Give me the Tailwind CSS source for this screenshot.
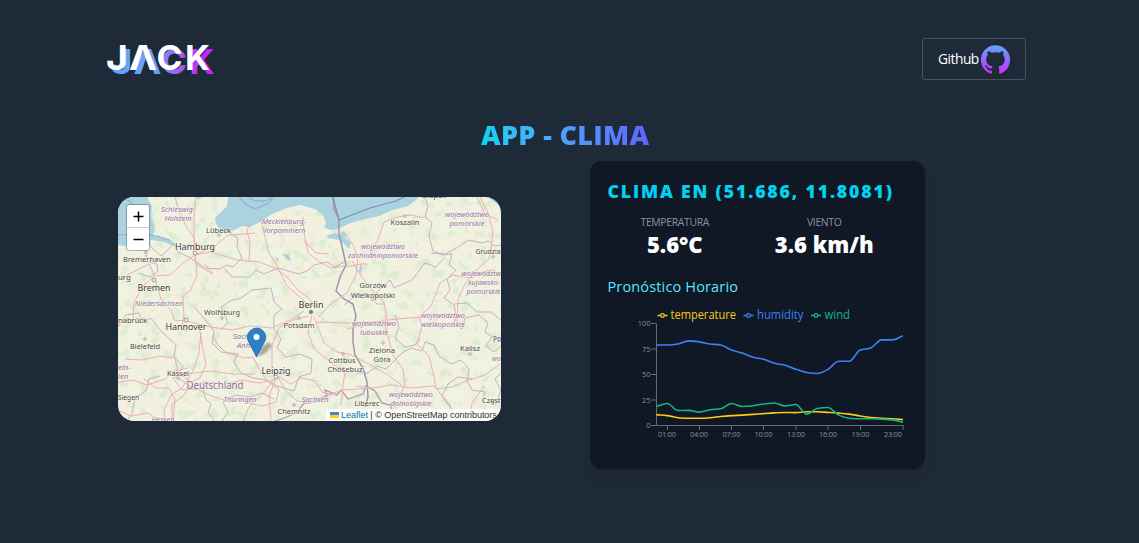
<!DOCTYPE html>
<html lang="es">
<head>
<meta charset="utf-8">
<title>App - Clima</title>
<script src="https://cdn.jsdelivr.net/npm/@tailwindcss/browser@4"></script>
</head>
<body class="h-[543px] overflow-hidden bg-[#1f2a39] font-['Open_Sans','Noto_Sans',sans-serif]">
<header class="flex items-start justify-between pt-[38px] pl-[105px] pr-[113px]">
  <svg class="mt-[2px]" width="112" height="38" viewBox="105 40 112 38" role="img" aria-label="JACK">
    <defs>
      <linearGradient id="lg" gradientUnits="userSpaceOnUse" x1="125" y1="0" x2="200" y2="0"><stop offset="0" stop-color="#60a5fa"/><stop offset=".35" stop-color="#6d9bfa"/><stop offset=".75" stop-color="#b04df8"/><stop offset="1" stop-color="#c026ff"/></linearGradient>
      <g id="word" font-family="Inter,sans-serif" font-weight="700" font-size="34">
        <text x="106" y="69.500" textLength="22" lengthAdjust="spacingAndGlyphs">J</text>
        <text x="129" y="69.500" textLength="28" lengthAdjust="spacingAndGlyphs">Λ</text>
        <text x="156.500" y="69.500" textLength="26" lengthAdjust="spacingAndGlyphs">C</text>
        <text x="185" y="69.500" textLength="25" lengthAdjust="spacingAndGlyphs">K</text>
      </g>
    </defs>
    <use href="#word" x="4.500" y="4" fill="url(#lg)"/>
    <use href="#word" fill="#fff"/>
  </svg>
  <a class="flex h-[42px] w-[104px] items-center rounded-[3px] border border-[#45515f] pl-[15px] text-[13.800px] text-white"><span class="w-[43px] tracking-[-0.500px] whitespace-nowrap">Github</span>
    <svg class="shrink-0" width="29" height="29" viewBox="0 0 24 24"><defs><linearGradient id="gg" x2="0" y2="1"><stop stop-color="#60a5fa"/><stop offset="1" stop-color="#c62fff"/></linearGradient></defs><path fill="url(#gg)" d="M12 .3a12 12 0 0 0-3.800 23.400c.6.1.8-.3.8-.6v-2c-3.300.7-4-1.600-4-1.600-.6-1.400-1.400-1.800-1.400-1.800-1-.7.1-.7.1-.7 1.200 0 1.900 1.200 1.900 1.200 1 1.800 2.800 1.300 3.500 1 0-.8.400-1.300.7-1.600-2.700-.3-5.500-1.300-5.500-6 0-1.200.5-2.300 1.300-3.100-.2-.4-.6-1.600 0-3.200 0 0 1-.3 3.400 1.200a11.500 11.500 0 0 1 6 0c2.300-1.500 3.300-1.200 3.300-1.200.6 1.600.2 2.800 0 3.200.9.800 1.300 1.900 1.300 3.200 0 4.600-2.800 5.600-5.500 5.900.5.400.9 1 .9 2.200v3.300c0 .3.100.7.800.6A12 12 0 0 0 12 .3"/></svg>
  </a>
</header>
<main>
  <h1 class="mt-[37px] ml-[481px] h-[36px] w-[171px] bg-gradient-to-r from-[#00d3f2] to-[#615fff] bg-clip-text text-[27px] leading-[36px] font-extrabold tracking-[0.350px] whitespace-nowrap text-transparent">APP - CLIMA</h1>
  <div class="mt-[8px] flex items-start pl-[118px]">
    <section class="relative mt-[36px] h-[224px] w-[383px] shrink-0 overflow-hidden rounded-2xl">
      <svg width="383" height="224" viewBox="118 197 383 224" class="block" font-family="Noto Sans,sans-serif">
        <defs>
          <filter id="woods" x="0" y="0" width="1" height="1"><feTurbulence type="fractalNoise" baseFrequency=".1" numOctaves="4" seed="8"/><feColorMatrix values="0 0 0 0 .70  0 0 0 0 .84  0 0 0 0 .62  9 0 0 0 -5.100"/></filter>
          <filter id="heath" x="0" y="0" width="1" height="1"><feTurbulence type="fractalNoise" baseFrequency=".05" numOctaves="4" seed="21"/><feColorMatrix values="0 0 0 0 .85  0 0 0 0 .91  0 0 0 0 .76  5 0 0 0 -2.500"/></filter>
          <filter id="soft"><feGaussianBlur stdDeviation="1.200"/></filter>
        </defs>
        <rect x="118" y="197" width="383" height="224" fill="#f2f0df"/>
        <rect x="118" y="197" width="383" height="224" filter="url(#heath)" opacity=".85"/>
        <rect x="118" y="197" width="383" height="224" filter="url(#woods)" opacity=".8"/>
        <g fill="#aad3df">
          <path d="M118 197h29l5 9-1 10 4 12-2 8 8 1 11 4 5 6-13-5-13-2-2 5-4 5-3-4-5-2-6 3-13-2z"/>
          <path d="M196 197l2 3 4-3zM228 197l-1 9-5 5-7 7 1 6 6 8 4 2 8-4 8-4 8 1 10-5 12-8 15-6 13-3 15 4 8 6 3 8-2 4 6 3 8-1 10-5 13-4 18-4 14-6 15-4 8-6 8-9z"/>
          <path d="M326 236l9-3 5 2 1-4 5 2-1 5 6 4-2 7-4-4-6-5-5-1-6-1zM488 197h13v9l-6-3zM282 253l7 2 2 6-5-2zM276 257l3 2-2 3zM360 264l2 2-1 8-2-2z"/>
        </g>
        <path d="M239 197l6 7 10 5 14-6 4-6M249 197l5 4 12 0 6-4M118 235l22-1 17 2 13 4M118 197l12 4 3 5" fill="none" stroke="#8f9bb8" stroke-width=".8"/>
        <g fill="none" stroke="#c0b1c3" stroke-width="1" stroke-linejoin="round">
          <path d="M149 241l2 6 10 9 5-4 8-9 4 9 11 5 16 11 14 1 8-4 6 2 9-9-5-11 1-9-8-5M225 269l7 8 18 0 6-7 8 4 14-6 21 6 8-3 7-6 13-3 8 5 9-5"/>
          <path d="M221 330l7-8-7-15 9-6 11-3 11-8 19-2 3 14 8 7-8 6 0 14 7 10-4 9 9 9 14-3 12 5-1 14-12 4-5 14-17-5-11-6-13-2-12-5-7-11 4-8-17-2-9-9 2-12-11-14-8-9"/>
          <path d="M145 251l3 11 9 2 1 7-8 6-12-4M118 327l8-12 13-2 4 10 8-5 9 12 16 15-2 12 9 9-6 11 10 7 9 6 7-3 2 11 6 6-3 8 9 13M160 376l-11 3-3 12-11 7-3 16-5 7M222 421l6-9-5-10 12-7 16 2 11-4 12 6"/>
          <path d="M425 197l3 9-3 11 7 6-3 13 4 15 10 4 9-1-3 11 7 5-9 9 3 11-6 8 10 7 2 11-2 8 8 5 3-11 14-3 9 8-3 9 7 5-6 9 8 6 7-6 9 9M431 253l14 1 10-5 9-6 5-3 13 3 7-2 5 5 8-1M444 258l-8 9-11-4-13 17-18 8-4-8-9 8-7 7-17-1-13 11"/>
          <path d="M356 373l12 0 9-7 9 3 16-16 9-5 11 3 3-9 9 3 5 11 12 8 10-4 8 9-2 12 5 9 13 2-3 10 14 2 5-14-6-11 8-8 8-1M448 421l2-14-8-11 6-12 10-7 14 2"/>
          <path d="M395 315l4 12-4 11 10 9 10-2 5-7M501 320l-10-8-14 0-10-9-13 1"/>
        </g>
        <path d="M333 197l1 12 5 10 0 15 4 17 3 14-6 12-4 14 8 8 9 5 3 12-3 13 0 13 2 13 8 13 4 14 1 15-3 10" fill="none" stroke="#a394ac" stroke-width="1.500"/>
        <path d="M333 197l2 8 4 15 31-12 26-7 8-4" fill="none" stroke="#8c89aa" stroke-width="1.200"/>
        <path d="M275 421l12-4 10-5 7-9 11-1 12-6-2-6 12 5 4-5 7 9 15-5 3-8 9 5 7 12 8 2 3 7 11 4" fill="none" stroke="#a99bb0" stroke-width="1.300"/>
        <g fill="none" stroke="#ecaeb6" stroke-width="1" stroke-linejoin="round">
          <path d="M175 197l4 14 7 15 8 12 1 15 1 10 1 13-7 15-7 5 1 22-3 9 6 5M196 197l-2 19 0 22 2 17 19-9 13-11 17-1 10-1M194 255l17-3 26 8 22 2 16 6 12 9 11 13 12 9 3 7M118 280l17-9 14-7 6 12 15-1 13-12 12-8M196 264l17 10-8-10M249 262l1-21-3-9 3-12"/>
          <path d="M154 276l-12 11-8 16-1 16-15 5M155 279l6 20 10 11 3 10 12 1 25 6 21 3 18-4 22 2 18-8 14-9M201 333l-2 20-6 18-11 17-11 7-7 15 1 12M200 331l3 19 3 14-6 14-8 4-14-9-3-15-15-2-18 4-17-1"/>
          <path d="M213 335l4 9 8 8 19 6 9-1 6 12 8 12 12 8-3 13-13 4-11-2-12-5-10 3-19-6-14-7-15 1-9-12 13-4 25-3 21 3 23 0M274 380l-15 3-16-3-17 4-22-2-13 4-8 10-11 8 0 16"/>
          <path d="M309 316l-16 4-14 8-7 17 0 20 3 16-6 15 2 25M278 377l8 14 11 10 14 2 15-8 18-5 24-2M275 378l-12 16-14 13-6 14M312 315l-4 17 6 17 11 9 9 7 11 7-2 14-2 19M318 317l14-14 15-10 9-18 2-18-5-12-8-12M310 307l-10-10-13-11-10-20-8-13-5-20-4-16"/>
          <path d="M314 317l10 26 13 9 12 2 16 8 18 10 19 13M118 382l15-2 14 5 18-6 9-8 14-3M345 266l-14 2-11-6-12-9-4-20-1-16M346 267l15-3 7 0M352 261l9 15 10 13 13 14 3 14 1 10M371 297l6 7 7 0M304 241l12 12 13 1M316 322l32 1 26-1"/>
          <path d="M385 315l1 14 7 26 10 14 2 15-5 12M347 329l22-6 19-3 31-3 3 9-5 18 12 12 5 21 2 12 16-2 14-6 19-6 18-13 8-12M434 386l16 19 6 16M434 386l-22 2-21-3-18 3-17-2M469 421l3-18 12-17M418 318l13-12 9-23 13-8 17 3 15-7 10-1"/>
          <path d="M370 254l8-15 6-17 13-5 14-2 12 3M480 197l8 16 5 18-2 18-2 10-16 14-8 11-7 16-1 22M498 220l-13-6-8-17"/>
          <path d="M144 379l12 9 13 0 6 11-2 22M118 410l13 6 17-3 12 8M333 395l-11-3-7-11-14-3-10 6-12-7"/>
        </g>
        <g fill="#eee" stroke="#888" stroke-width=".8"><circle cx="195" cy="253" r="2"/><circle cx="154" cy="280" r="2"/><circle cx="186" cy="320" r="2"/><circle cx="276" cy="377" r="2"/><circle cx="311" cy="312" r="1.800" fill="#777"/><g stroke-width=".6"><circle cx="146" cy="252" r="1.300"/><circle cx="219" cy="235" r="1.300"/><circle cx="145" cy="339" r="1.300"/><circle cx="222" cy="318" r="1.300"/><circle cx="178" cy="378" r="1.300"/><circle cx="405" cy="216" r="1.300"/><circle cx="373" cy="299" r="1.300"/><circle cx="383" cy="343" r="1.300"/><circle cx="343" cy="354" r="1.300"/><circle cx="470" cy="354" r="1.300"/><circle cx="493" cy="257" r="1.300"/><circle cx="294" cy="405" r="1.300"/><circle cx="299" cy="318" r="1.300"/></g></g>
        <g text-anchor="middle" paint-order="stroke" stroke="#f7f6eb" stroke-opacity=".75" stroke-width="1.500" stroke-linejoin="round">
          <g font-size="7.800" fill="#4a4a4a">
            <text x="218.500" y="232.500" textLength="25" lengthAdjust="spacingAndGlyphs">Lübeck</text><text x="147" y="262" textLength="48" lengthAdjust="spacingAndGlyphs">Bremerhaven</text><text x="118" y="280" text-anchor="start">urg</text><text x="222" y="314.500" textLength="36" lengthAdjust="spacingAndGlyphs">Wolfsburg</text><text x="118" y="323" text-anchor="start" textLength="29" lengthAdjust="spacingAndGlyphs">nabrück</text><text x="145" y="348.500" textLength="30" lengthAdjust="spacingAndGlyphs">Bielefeld</text><text x="178" y="375.500" textLength="22" lengthAdjust="spacingAndGlyphs">Kassel</text><text x="118" y="399.500" text-anchor="start" textLength="21" lengthAdjust="spacingAndGlyphs">Siegen</text><text x="299" y="327.500" textLength="31" lengthAdjust="spacingAndGlyphs">Potsdam</text><text x="294" y="413.500" textLength="33" lengthAdjust="spacingAndGlyphs">Chemnitz</text><text x="405" y="224.500" textLength="29" lengthAdjust="spacingAndGlyphs">Koszalin</text><text x="475.500" y="254" text-anchor="start" textLength="25" lengthAdjust="spacingAndGlyphs">Grudzia</text><text x="373" y="288" textLength="27" lengthAdjust="spacingAndGlyphs">Gorzów</text><text x="373" y="297.500" textLength="44" lengthAdjust="spacingAndGlyphs">Wielkopolski</text><text x="382" y="352.500" textLength="26" lengthAdjust="spacingAndGlyphs">Zielona</text><text x="382" y="361.500" textLength="17" lengthAdjust="spacingAndGlyphs">Góra</text><text x="470" y="351" textLength="20" lengthAdjust="spacingAndGlyphs">Kalisz</text><text x="342" y="363" textLength="27" lengthAdjust="spacingAndGlyphs">Cottbus</text><text x="345" y="372" textLength="35" lengthAdjust="spacingAndGlyphs">Chóśebuz</text><text x="367" y="405.500" textLength="25" lengthAdjust="spacingAndGlyphs">Liberec</text><text x="482" y="403" text-anchor="start" textLength="18.500" lengthAdjust="spacingAndGlyphs">Częst</text><text x="434" y="198">Słupsk</text>
          </g>
          <g font-size="9.600" fill="#3c3c3c"><text x="195" y="250" textLength="40" lengthAdjust="spacingAndGlyphs">Hamburg</text><text x="154" y="291" textLength="33" lengthAdjust="spacingAndGlyphs">Bremen</text><text x="186" y="330" textLength="41" lengthAdjust="spacingAndGlyphs">Hannover</text><text x="311" y="308" textLength="25" lengthAdjust="spacingAndGlyphs">Berlin</text><text x="276" y="373.500" textLength="29" lengthAdjust="spacingAndGlyphs">Leipzig</text></g>
          <g font-size="7.700" font-style="italic" fill="#9a70a6">
            <text x="178" y="212" textLength="34" lengthAdjust="spacingAndGlyphs">Schleswig-</text><text x="178" y="221" textLength="27" lengthAdjust="spacingAndGlyphs">Holstein</text><text x="284" y="223.500" textLength="44" lengthAdjust="spacingAndGlyphs">Mecklenburg-</text><text x="284" y="232.500" textLength="43" lengthAdjust="spacingAndGlyphs">Vorpommern</text><text x="159" y="305.500" textLength="48" lengthAdjust="spacingAndGlyphs">Niedersachsen</text><text x="233" y="339" text-anchor="start" textLength="30" lengthAdjust="spacingAndGlyphs">Sachsen-</text><text x="237" y="348" text-anchor="start" textLength="22" lengthAdjust="spacingAndGlyphs">Anhalt</text><text x="240" y="402" textLength="33" lengthAdjust="spacingAndGlyphs">Thüringen</text><text x="163" y="422" textLength="23" lengthAdjust="spacingAndGlyphs">Hessen</text><text x="118" y="370" text-anchor="start">ein-</text><text x="118" y="379" text-anchor="start">len</text><text x="315" y="402" textLength="27" lengthAdjust="spacingAndGlyphs">Sachsen</text><text x="467" y="217" textLength="44" lengthAdjust="spacingAndGlyphs">województwo</text><text x="467" y="226" textLength="35" lengthAdjust="spacingAndGlyphs">pomorskie</text><text x="383" y="249" textLength="44" lengthAdjust="spacingAndGlyphs">województwo</text><text x="383" y="258" textLength="70" lengthAdjust="spacingAndGlyphs">zachodniopomorskie</text><text x="461.500" y="276" text-anchor="start" textLength="39.500" lengthAdjust="spacingAndGlyphs">województw</text><text x="484" y="285" textLength="32" lengthAdjust="spacingAndGlyphs">kujawsko-</text><text x="483.500" y="294" textLength="34" lengthAdjust="spacingAndGlyphs">pomorskie</text><text x="374" y="326" textLength="44" lengthAdjust="spacingAndGlyphs">województwo</text><text x="374" y="335" textLength="28" lengthAdjust="spacingAndGlyphs">lubuskie</text><text x="443" y="318" textLength="44" lengthAdjust="spacingAndGlyphs">województwo</text><text x="443" y="327" textLength="44" lengthAdjust="spacingAndGlyphs">wielkopolskie</text><text x="411" y="397" textLength="44" lengthAdjust="spacingAndGlyphs">województwo</text><text x="411" y="406" textLength="41" lengthAdjust="spacingAndGlyphs">dolnośląskie</text><text x="492" y="361" text-anchor="start" textLength="9" lengthAdjust="spacingAndGlyphs">wo</text>
          </g>
          <text x="215" y="389" font-size="10" fill="#8d6a9c" textLength="57" lengthAdjust="spacingAndGlyphs">Deutschland</text><text x="493" y="342" font-size="8" font-weight="600" fill="#8d6a9c" text-anchor="start" textLength="8" lengthAdjust="spacingAndGlyphs">Po</text>
        </g>
        <path d="M257 357l5-10 7-5 3 4-6 7z" fill="#000" opacity=".3" filter="url(#soft)"/>
        <path d="M256.500 357l-7.500-14.500a9.200 9.200 0 1 1 15.200 0z" fill="#2b80c6" stroke="#216aa8" stroke-width=".8"/><circle cx="256.500" cy="337" r="3" fill="#fff"/>
      </svg>
      <div class="absolute top-[7px] left-[8px] h-[47px] w-[24px] rounded-[3px] border border-black/25 bg-white bg-clip-padding">
        <svg width="22" height="45" viewBox="0 0 22 45" stroke="#000" stroke-width="1.500"><path d="M6.500 11.500h10M11.500 6.500v10M6.500 34.500h10"/><path d="M0 22.500h22" stroke="#ccc" stroke-width="1"/></svg>
      </div>
      <div class="absolute right-0 bottom-0 flex h-[12px] w-[175px] items-center bg-white/80 pl-[4px] font-['Liberation_Sans',sans-serif] text-[9px] leading-[12px] whitespace-nowrap text-[#333]">
        <svg class="mr-[2px] shrink-0" width="9" height="6"><path d="M0 0h9v3H0z" fill="#4c7be1"/><path d="M0 3h9v3H0z" fill="#ffd500"/></svg>
        <span class="tracking-[-0.020px]"><span class="text-[#0078a8]">Leaflet</span> | © OpenStreetMap contributors</span>
      </div>
    </section>
    <section class="ml-[88.500px] h-[308px] w-[335px] shrink-0 rounded-xl bg-[#101725] px-[18px] pt-[17px] shadow-lg">
      <h2 class="h-[26px] text-[17.700px] leading-[26px] font-extrabold tracking-[1.840px] whitespace-nowrap text-[#00d3f2]">CLIMA EN (51.686, 11.8081)</h2>
      <div class="mt-[11px] grid grid-cols-2 text-center">
        <div class="pr-[15px]"><p class="text-[10.400px] leading-[15px] tracking-[-0.330px] text-[#8b93a1]">TEMPERATURA</p><p class="text-[22px] leading-[28px] font-extrabold tracking-[0px] text-white">5.6°C</p></div>
        <div class="pr-[15px]"><p class="text-[10.400px] leading-[15px] tracking-[-0.330px] text-[#8b93a1]">VIENTO</p><p class="text-[22px] leading-[28px] font-extrabold tracking-[0px] text-white">3.6 km/h</p></div>
      </div>
      <h3 class="mt-[18px] h-[22px] text-[14.500px] leading-[22px] tracking-[0.150px] text-[#53eafd]">Pronóstico Horario</h3>
      <svg id="chart" class="mt-[7px] -ml-[1.500px]" width="310" height="140" viewBox="606 305 310 140" fill="none" font-family="Open Sans,sans-serif">
        <g stroke="#666b73"><path d="M656.500 323.500v102H903.500M651 323.500h5M651 349h5M651 374.500h5M651 400h5M651 425.500h5M667.500 425v5M699.500 425v5M731.500 425v5M763.500 425v5M796 425v5M828 425v5M860.500 425v5M903 425v5"/></g>
        <g font-size="7.400" fill="#8b8f96" text-anchor="end"><text x="650.500" y="326.300">100</text><text x="650.500" y="351.800">75</text><text x="650.500" y="377.200">50</text><text x="650.500" y="402.600">25</text><text x="650.500" y="428.100">0</text></g>
        <g font-size="7.400" fill="#8b8f96" text-anchor="middle"><text x="667" y="436.500" textLength="18">01:00</text><text x="699" y="436.500" textLength="18">04:00</text><text x="731.500" y="436.500" textLength="18">07:00</text><text x="763.500" y="436.500" textLength="18">10:00</text><text x="796" y="436.500" textLength="18">13:00</text><text x="828" y="436.500" textLength="18">16:00</text><text x="860.500" y="436.500" textLength="18">19:00</text><text x="893" y="436.500" textLength="18">23:00</text></g>
        <g font-size="12"><text x="670.500" y="319" fill="#facc15" textLength="65.500" lengthAdjust="spacingAndGlyphs">temperature</text><text x="757" y="319" fill="#3b82f6" textLength="46.500" lengthAdjust="spacingAndGlyphs">humidity</text><text x="824.500" y="319" fill="#10b981" textLength="25.500" lengthAdjust="spacingAndGlyphs">wind</text></g>
        <g stroke-width="1.300"><path stroke="#facc15" d="M657.500 315.500h3m4 0h3"/><circle cx="662.500" cy="315.500" r="1.800" stroke="#facc15"/><path stroke="#3b82f6" d="M743.500 315.500h3m4 0h3"/><circle cx="748.500" cy="315.500" r="1.800" stroke="#3b82f6"/><path stroke="#10b981" d="M811 315.500h3m4 0h3"/><circle cx="816" cy="315.500" r="1.800" stroke="#10b981"/></g>
        <g stroke-width="1.600"><path id="temp" stroke="#facc15"/><path id="hum" stroke="#3b82f6"/><path id="wind" stroke="#10b981"/></g>
      </svg>
    </section>
  </div>
</main>
<script>
// Monotone cubic interpolation through hourly values
function curve(id, v) {
  const h = 246.5 / 23, p = v.map((y, i) => [656.5 + i * h, 425.3 - y * 1.017]);
  const s = p.slice(1).map((q, i) => (q[1] - p[i][1]) / h);
  const m = p.map((_, i) => {
    if (i === 0) return s[0];
    if (i === p.length - 1) return s[i - 1];
    const a = s[i - 1], b = s[i];
    return a * b <= 0 ? 0 : Math.sign(a) * 2 * Math.min(Math.abs(a), Math.abs(b), Math.abs(a + b) / 4);
  });
  let d = 'M' + p[0];
  for (let i = 1; i < p.length; i++)
    d += `C${p[i-1][0] + h/3},${p[i-1][1] + m[i-1]*h/3} ${p[i][0] - h/3},${p[i][1] - m[i]*h/3} ${p[i]}`;
  document.getElementById(id).setAttribute('d', d);
}
curve('temp', [10.5,9.5,7.5,7,7,7.5,8.7,9.5,10,10.7,11.5,12.2,12.6,12.5,13.3,13.3,12.7,12,11,9.2,7.7,7,6.4,5.6]);
curve('hum', [79,79,80,83,82,80,79,74,71,67,65,61,59,55,52,51,55,63,63,74,76,84,84,88]);
curve('wind', [18.5,21.5,14.5,14.7,13,15.3,16.3,21.5,18.5,19.3,21,22,19,20.5,11,16.5,17.5,10,7,6.5,6.5,6,5.3,3]);
</script>
</body>
</html>
